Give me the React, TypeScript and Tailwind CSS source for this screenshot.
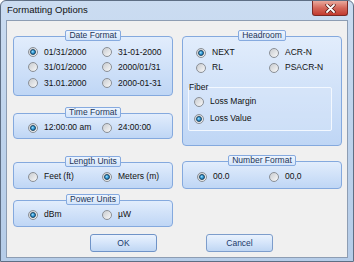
import React from "react";

function Radio({ checked }: { checked?: boolean }) {
  return (
    <span className="inline-flex w-[10px] h-[10px] shrink-0 items-center justify-center rounded-full border border-[#8a8f96] bg-gradient-to-br from-[#c9ccd0] to-[#f8f8f8]">
      {checked && (
        <span className="w-[6px] h-[6px] rounded-full border border-[#1b4563] bg-[radial-gradient(circle_at_40%_40%,#9ee0ff_0%,#2c97d6_50%,#115a8c_100%)]" />
      )}
    </span>
  );
}

function Item({ label, checked }: { label: string; checked?: boolean }) {
  return (
    <div className="flex items-center gap-[6px] h-full text-[8.5px] leading-none text-[#111]">
      <Radio checked={checked} />
      <span>{label}</span>
    </div>
  );
}

function GroupLabel({ text }: { text: string }) {
  return (
    <div className="relative z-10 self-center -mb-[5px] h-[11px] px-[3px] flex items-center rounded-[2px] border border-[#86aadf] bg-gradient-to-b from-[#eef5fe] to-[#d3e4fa] text-[8.5px] leading-none text-[#1d3557]">
      {text}
    </div>
  );
}

const boxCls =
  "rounded-[4px] border border-[#84a9de] bg-gradient-to-b from-[#e2edfc] to-[#bfd6f5]";

export default function App() {
  return (
    <div className="w-[354px] h-[262px] relative flex flex-col rounded-t-[6px] border border-[#5e6e84] bg-gradient-to-b from-[#cbdcf1] via-[#bed3ec] to-[#b5cce8] font-['Liberation_Sans',sans-serif]">
      {/* title bar */}
      <div className="h-[19px] flex items-center pl-[6px] text-[9.5px] text-[#111]">
        Formatting Options
      </div>
      <div className="absolute top-0 right-[5px] w-[36px] h-[15px] rounded-b-[3px] border border-t-0 border-[#7a2a25] bg-gradient-to-b from-[#e9a99d] via-[#d4675a] to-[#c2392e] flex items-center justify-center">
        <svg width="11" height="9" viewBox="0 0 11 9">
          <path d="M2 1 L9 8 M9 1 L2 8" stroke="#4a1410" strokeWidth="3.2" strokeLinecap="round" />
          <path d="M2 1 L9 8 M9 1 L2 8" stroke="#ffffff" strokeWidth="1.8" strokeLinecap="round" />
        </svg>
      </div>

      {/* client */}
      <div className="flex-1 mx-[5px] mb-[3px] border border-[#8d9db3] bg-[#f0f0f0] flex flex-col">
        <div className="flex pt-[9px] pl-[6px] gap-[9px] items-start">
          {/* left column */}
          <div className="w-[160px] flex flex-col">
            <div className="flex flex-col">
              <GroupLabel text="Date Format" />
              <div className={`${boxCls} h-[60px] pt-[7px] pl-[14px] grid grid-cols-[74px_1fr] auto-rows-[15.5px]`}>
                <Item label="01/31/2000" checked />
                <Item label="31-01-2000" />
                <Item label="31/01/2000" />
                <Item label="2000/01/31" />
                <Item label="31.01.2000" />
                <Item label="2000-01-31" />
              </div>
            </div>
            <div className="flex flex-col mt-[11px]">
              <GroupLabel text="Time Format" />
              <div className={`${boxCls} h-[26px] pt-[6px] pl-[14px] grid grid-cols-[74px_1fr] auto-rows-[15px]`}>
                <Item label="12:00:00 am" checked />
                <Item label="24:00:00" />
              </div>
            </div>
            <div className="flex flex-col mt-[17px]">
              <GroupLabel text="Length Units" />
              <div className={`${boxCls} h-[27px] pt-[6px] pl-[14px] grid grid-cols-[74px_1fr] auto-rows-[15px]`}>
                <Item label="Feet (ft)" />
                <Item label="Meters (m)" checked />
              </div>
            </div>
            <div className="flex flex-col mt-[5px]">
              <GroupLabel text="Power Units" />
              <div className={`${boxCls} h-[27px] pt-[6px] pl-[14px] grid grid-cols-[74px_1fr] auto-rows-[15px]`}>
                <Item label="dBm" checked />
                <Item label="µW" />
              </div>
            </div>
          </div>

          {/* right column */}
          <div className="w-[160px] flex flex-col">
            <div className="flex flex-col">
              <GroupLabel text="Headroom" />
              <div className={`${boxCls} h-[110px] pt-[8px] flex flex-col`}>
                <div className="pl-[13px] grid grid-cols-[73px_1fr] auto-rows-[15px]">
                  <Item label="NEXT" checked />
                  <Item label="ACR-N" />
                  <Item label="RL" />
                  <Item label="PSACR-N" />
                </div>
                <fieldset className="mt-[7px] ml-[5px] mr-[9px] rounded-[2px] border border-[#f3f8ff] bg-[#dce9fb]/40 pl-[5px] pb-[3px]">
                  <legend className="text-[8.5px] leading-[10px] text-[#111] ml-[-5px]">Fiber</legend>
                  <div className="flex flex-col pt-[1px]">
                    <div className="h-[17px]"><Item label="Loss Margin" /></div>
                    <div className="h-[17px]"><Item label="Loss Value" checked /></div>
                  </div>
                </fieldset>
              </div>
            </div>
            <div className="flex flex-col mt-[9px]">
              <GroupLabel text="Number Format" />
              <div className={`${boxCls} h-[28px] pt-[7px] pl-[14px] grid grid-cols-[72px_1fr] auto-rows-[15px]`}>
                <Item label="00.0" checked />
                <Item label="00,0" />
              </div>
            </div>
          </div>
        </div>

        {/* buttons */}
        <div className="flex mt-[7px] pl-[83px] gap-[49px]">
          <button className="w-[67px] h-[18px] rounded-[3px] border border-[#6f93c7] bg-gradient-to-b from-[#eaf2fd] via-[#d5e5fa] to-[#bfd6f3] text-[8.5px] text-[#1b3a6b] flex items-center justify-center">
            OK
          </button>
          <button className="w-[67px] h-[18px] rounded-[3px] border border-[#7d9dcb] bg-gradient-to-b from-[#eaf2fd] via-[#d5e5fa] to-[#bfd6f3] text-[8.5px] text-[#1b3a6b] flex items-center justify-center">
            Cancel
          </button>
        </div>
      </div>
    </div>
  );
}
